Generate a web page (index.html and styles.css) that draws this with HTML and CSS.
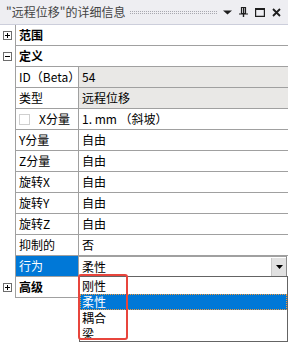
FILE: index.html
```html
<!DOCTYPE html>
<html lang="zh-CN">
<head>
    <meta charset="UTF-8">
    <title>详细信息</title>
    <link rel="stylesheet" href="styles.css">
</head>
<body>
    <div class="panel">
        <div class="titlebar">
            <span class="title">"远程位移"的详细信息</span>
            <span class="grip"></span>
            <svg class="ticon" width="9" height="6" viewBox="0 0 9 6"><path d="M0 1.5h9L4.5 5.5z" fill="#1e1e1e"/></svg>
            <svg class="ticon" width="9" height="10" viewBox="0 0 9 10"><path d="M2.5 0.5h4v6h-4z M0 7h9" stroke="#1e1e1e" stroke-width="1.2" fill="none"/><path d="M4.5 7v3" stroke="#1e1e1e" stroke-width="1.4"/><path d="M4.6 1v5.5" stroke="#1e1e1e" stroke-width="1.4"/></svg>
            <svg class="ticon" width="10" height="9" viewBox="0 0 10 9"><path d="M0.6 1.2h8.8v7.2h-8.8z" stroke="#1e1e1e" stroke-width="1.2" fill="none"/><path d="M0 1h10" stroke="#1e1e1e" stroke-width="2"/></svg>
            <svg class="ticon" width="9" height="9" viewBox="0 0 9 9"><path d="M1 1l7 7M8 1l-7 7" stroke="#1e1e1e" stroke-width="1.8"/></svg>
        </div>

        <div class="grid">
            <div class="row group">
                <div class="gutter"><svg class="toggle" width="9" height="9" viewBox="0 0 9 9"><rect x="0.5" y="0.5" width="8" height="8" fill="#fff" stroke="#6d6d6d"/><path d="M2 4.5h5M4.5 2v5" stroke="#000"/></svg></div>
                <div class="cell head">范围</div>
            </div>
            <div class="row group">
                <div class="gutter"><svg class="toggle" width="9" height="9" viewBox="0 0 9 9"><rect x="0.5" y="0.5" width="8" height="8" fill="#fff" stroke="#6d6d6d"/><path d="M2 4.5h5" stroke="#000"/></svg></div>
                <div class="cell head">定义</div>
            </div>

            <div class="row">
                <div class="gutter"></div>
                <div class="label">ID（Beta）</div>
                <div class="value readonly">54</div>
            </div>
            <div class="row">
                <div class="gutter"></div>
                <div class="label">类型</div>
                <div class="value readonly">远程位移</div>
            </div>
            <div class="row">
                <div class="gutter"></div>
                <div class="label"><span class="check"></span>X分量</div>
                <div class="value">1. mm （斜坡）</div>
            </div>
            <div class="row">
                <div class="gutter"></div>
                <div class="label">Y分量</div>
                <div class="value">自由</div>
            </div>
            <div class="row">
                <div class="gutter"></div>
                <div class="label">Z分量</div>
                <div class="value">自由</div>
            </div>
            <div class="row">
                <div class="gutter"></div>
                <div class="label">旋转X</div>
                <div class="value">自由</div>
            </div>
            <div class="row">
                <div class="gutter"></div>
                <div class="label">旋转Y</div>
                <div class="value">自由</div>
            </div>
            <div class="row">
                <div class="gutter"></div>
                <div class="label">旋转Z</div>
                <div class="value">自由</div>
            </div>
            <div class="row">
                <div class="gutter"></div>
                <div class="label">抑制的</div>
                <div class="value">否</div>
            </div>
            <div class="row">
                <div class="gutter"></div>
                <div class="label selected">行为</div>
                <div class="value combo">
                    <span class="combo-text">柔性</span>
                    <span class="combo-btn"><svg width="7" height="4" viewBox="0 0 7 4"><path d="M0 0h7L3.5 4z" fill="#000"/></svg></span>
                </div>
            </div>

            <div class="row group">
                <div class="gutter"><svg class="toggle" width="9" height="9" viewBox="0 0 9 9"><rect x="0.5" y="0.5" width="8" height="8" fill="#fff" stroke="#6d6d6d"/><path d="M2 4.5h5M4.5 2v5" stroke="#000"/></svg></div>
                <div class="cell head">高级</div>
            </div>

            <!-- open combo list -->
            <div class="dropdown">
                <div class="option">刚性</div>
                <div class="option active">柔性</div>
                <div class="option">耦合</div>
                <div class="option">梁</div>
            </div>
            <div class="mark"></div>
        </div>
    </div>
</body>
</html>
```

FILE: styles.css
```css
* {
    box-sizing: border-box;
    margin: 0;
    padding: 0;
}
body {
    font-family: "Noto Sans CJK SC", "Noto Sans", sans-serif;
    font-size: 12px;
    color: #000;
    background: #fff;
}
.panel {
    width: 288px;
    height: 343px;
    overflow: hidden;
}
.titlebar {
    height: 25px;
    background: #eeeef2;
    border-bottom: 1px solid #cccedb;
    display: flex;
    align-items: center;
    padding: 0 7px 0 6px;
}
.title {
    color: #444;
    white-space: nowrap;
    line-height: 16px;
}
.grip {
    flex: 1;
    height: 3px;
    margin: 1px 6px 0 5px;
    border-top: 1px dotted #a8a8b0;
    border-bottom: 1px dotted #a8a8b0;
}
.ticon {
    margin-left: 7px;
}
.ticon:first-of-type {
    margin-left: 0;
}
.grid {
    position: relative;
}
.row {
    display: flex;
    height: 21px;
}
.gutter {
    width: 15px;
    flex: none;
    display: flex;
    align-items: center;
    padding-left: 3px;
}
.cell, .label, .value {
    border-bottom: 1px solid #a0a0a0;
    display: flex;
    align-items: center;
    white-space: nowrap;
    line-height: 16px;
}
.cell {
    flex: 1;
    border-left: 1px solid #a0a0a0;
    padding-left: 3px;
}
.head {
    font-weight: bold;
}
.label {
    width: 64px;
    flex: none;
    border-left: 1px solid #a0a0a0;
    border-right: 1px solid #a0a0a0;
    padding-left: 3px;
}
.label.selected {
    background: #0078d7;
    color: #fff;
}
.value {
    flex: 1;
    padding-left: 3px;
}
.value.readonly {
    background: #e9e8e6;
}
.check {
    width: 11px;
    height: 11px;
    border: 1px solid #cfcfcf;
    background: #fff;
    margin-right: 9px;
}
.combo {
    padding: 0;
    border: 1px solid #a0a0a0;
    border-left: none;
    border-right: 1px solid #8c8c8c;
    margin-right: 1px;
    background: #fff;
}
.combo-text {
    flex: 1;
    padding-left: 3px;
}
.combo-btn {
    width: 15px;
    height: 18px;
    background: #e1e1e1;
    border-left: 1px solid #c8c8c8;
    display: flex;
    align-items: center;
    justify-content: center;
}
.dropdown {
    position: absolute;
    left: 79px;
    top: 251px;
    width: 209px;
    height: 66px;
    border: 1px solid #646464;
    background: #fff;
    padding-top: 1px;
}
.option {
    height: 16px;
    line-height: 16px;
    padding-left: 2px;
}
.option.active {
    background: #0078d7;
    color: #fff;
    outline: 1px dotted #f29a3a;
    outline-offset: -1px;
}
.mark {
    position: absolute;
    left: 78px;
    top: 249px;
    width: 50px;
    height: 66px;
    border: 2px solid #e8453c;
    border-radius: 3px;
}
```
